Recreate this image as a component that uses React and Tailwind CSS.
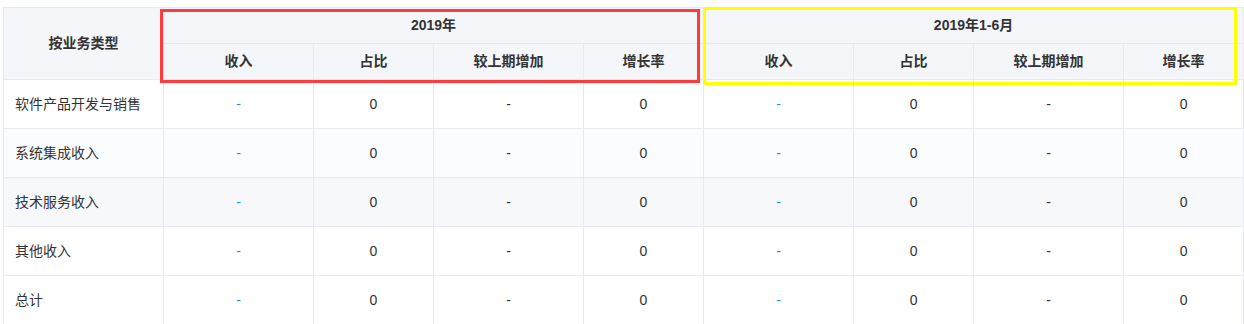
import React from "react";

const rows = ["软件产品开发与销售", "系统集成收入", "技术服务收入", "其他收入", "总计"];
const subCols = ["收入", "占比", "较上期增加", "增长率"];
const rowBg = ["bg-white", "bg-[#fbfcfe]", "bg-[#f7f8fa]", "bg-white", "bg-white"];

const App = () => {
  const cell = "border border-[#e8eaf0] text-center";

  const renderGroup = () => (
    <>
      <td className={`${cell} text-[#1890ff]`}>-</td>
      <td className={cell}>0</td>
      <td className={cell}>-</td>
      <td className={cell}>0</td>
    </>
  );

  return (
    <div
      className="relative h-[324px] w-[1244px] overflow-hidden bg-white pl-[3px] pt-[7px] text-[14px] text-[#333]"
      style={{ fontFamily: '"Liberation Sans", "Noto Sans CJK SC", sans-serif' }}
    >
      <table className="w-[1241px] table-fixed border-collapse">
        <colgroup>
          <col className="w-[160px]" />
          {[0, 1].map((g) => (
            <React.Fragment key={g}>
              <col className="w-[150px]" />
              <col className="w-[120px]" />
              <col className="w-[150px]" />
              <col className="w-[120px]" />
            </React.Fragment>
          ))}
        </colgroup>
        <thead className="bg-[#f5f6fa] font-bold text-[#333]">
          <tr className="h-[36px]">
            <th rowSpan={2} className={cell}>按业务类型</th>
            <th colSpan={4} className={cell}>2019年</th>
            <th colSpan={4} className={cell}>2019年1-6月</th>
          </tr>
          <tr className="h-[36px]">
            {[...subCols, ...subCols].map((c, i) => (
              <th key={i} className={cell}>{c}</th>
            ))}
          </tr>
        </thead>
        <tbody>
          {rows.map((r, i) => (
            <tr key={r} className={`h-[49px] ${rowBg[i]}`}>
              <td className="border border-[#e8eaf0] pl-[11px] text-left">{r}</td>
              {renderGroup()}
              {renderGroup()}
            </tr>
          ))}
        </tbody>
      </table>

      {/* annotation boxes */}
      <div className="pointer-events-none absolute left-[160px] top-[9px] h-[74px] w-[540px] border-[3px] border-[#ff3b3b]" />
      <div className="pointer-events-none absolute left-[703px] top-[7px] h-[78px] w-[534px] border-[3px] border-[#ffff00]" />
    </div>
  );
};

export default App;
